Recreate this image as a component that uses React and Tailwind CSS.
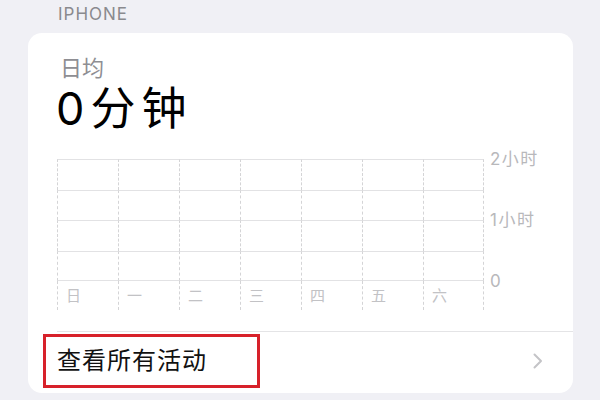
import React from "react";

const days = ["日", "一", "二", "三", "四", "五", "六"];
const cjk = { fontFamily: '"Inter", "Noto Sans CJK SC", sans-serif' };

function GridRow({ last }) {
  return (
    <div className="flex">
      {days.map((d, i) => (
        <div
          key={d}
          className={`h-[30.5px] w-[61px] border-t border-l border-[#e2e2e4] [border-left-style:dashed] [border-left-color:#d4d4d6] ${
            i === 6 ? "border-r [border-right-style:dashed] [border-right-color:#d4d4d6]" : ""
          } ${last ? "border-b" : ""}`}
        />
      ))}
    </div>
  );
}

function Chart() {
  return (
    <div className="flex pl-[29px]">
      <div className="flex flex-col">
        <GridRow />
        <GridRow />
        <GridRow />
        <GridRow last />
        <div className="flex">
          {days.map((d, i) => (
            <div
              key={d}
              className={`h-[29px] w-[61px] pl-[8px] pt-[6px] text-[15px] leading-[18px] text-[#c2c2c5] border-l border-dashed border-[#d4d4d6] ${
                i === 6 ? "border-r" : ""
              }`}
            >
              {d}
            </div>
          ))}
        </div>
      </div>
      <div className="flex flex-col gap-[41px] -mt-[10px] pl-[6px] text-[17px] leading-[20px] tracking-[1.5px] text-[#b8b8bb]">
        <span>2小时</span>
        <span>1小时</span>
        <span>0</span>
      </div>
    </div>
  );
}

export default function App() {
  return (
    <div className="w-[600px] h-[400px] overflow-hidden bg-[#f0f0f5]" style={cjk}>
      <div className="h-[33px] pl-[58px] pt-[4px] text-[17px] leading-[20px] text-[#8a8a8e] tracking-[1px]">
        IPHONE
      </div>
      <div className="ml-[28px] w-[545px] h-[360px] rounded-[14px] bg-white flex flex-col">
        <div className="pl-[32px] pt-[22px] text-[22px] leading-[26px] text-[#8e8e93]">日均</div>
        <div className="pl-[28px] mt-[2px] text-[45px] leading-[52px] tracking-[6px] text-black">0分钟</div>
        <div className="mt-[24px]">
          <Chart />
        </div>
        <div className="mt-[21px] ml-[29px] border-t border-[#e4e4e6]" />
        <div className="flex items-center justify-between pl-[15px] pr-[29px] mt-[2px]">
          <div className="flex items-center w-[217px] h-[54px] border-[3px] border-[#d7212a] pl-[11px] text-[24px] tracking-[1px] text-[#111]">
            查看所有活动
          </div>
          <svg width="12" height="16" viewBox="0 0 12 16">
            <path d="M2.5 1.5 L9 8 L2.5 14.5" fill="none" stroke="#c4c4c7" strokeWidth="2" strokeLinecap="round" strokeLinejoin="round" />
          </svg>
        </div>
      </div>
    </div>
  );
}
